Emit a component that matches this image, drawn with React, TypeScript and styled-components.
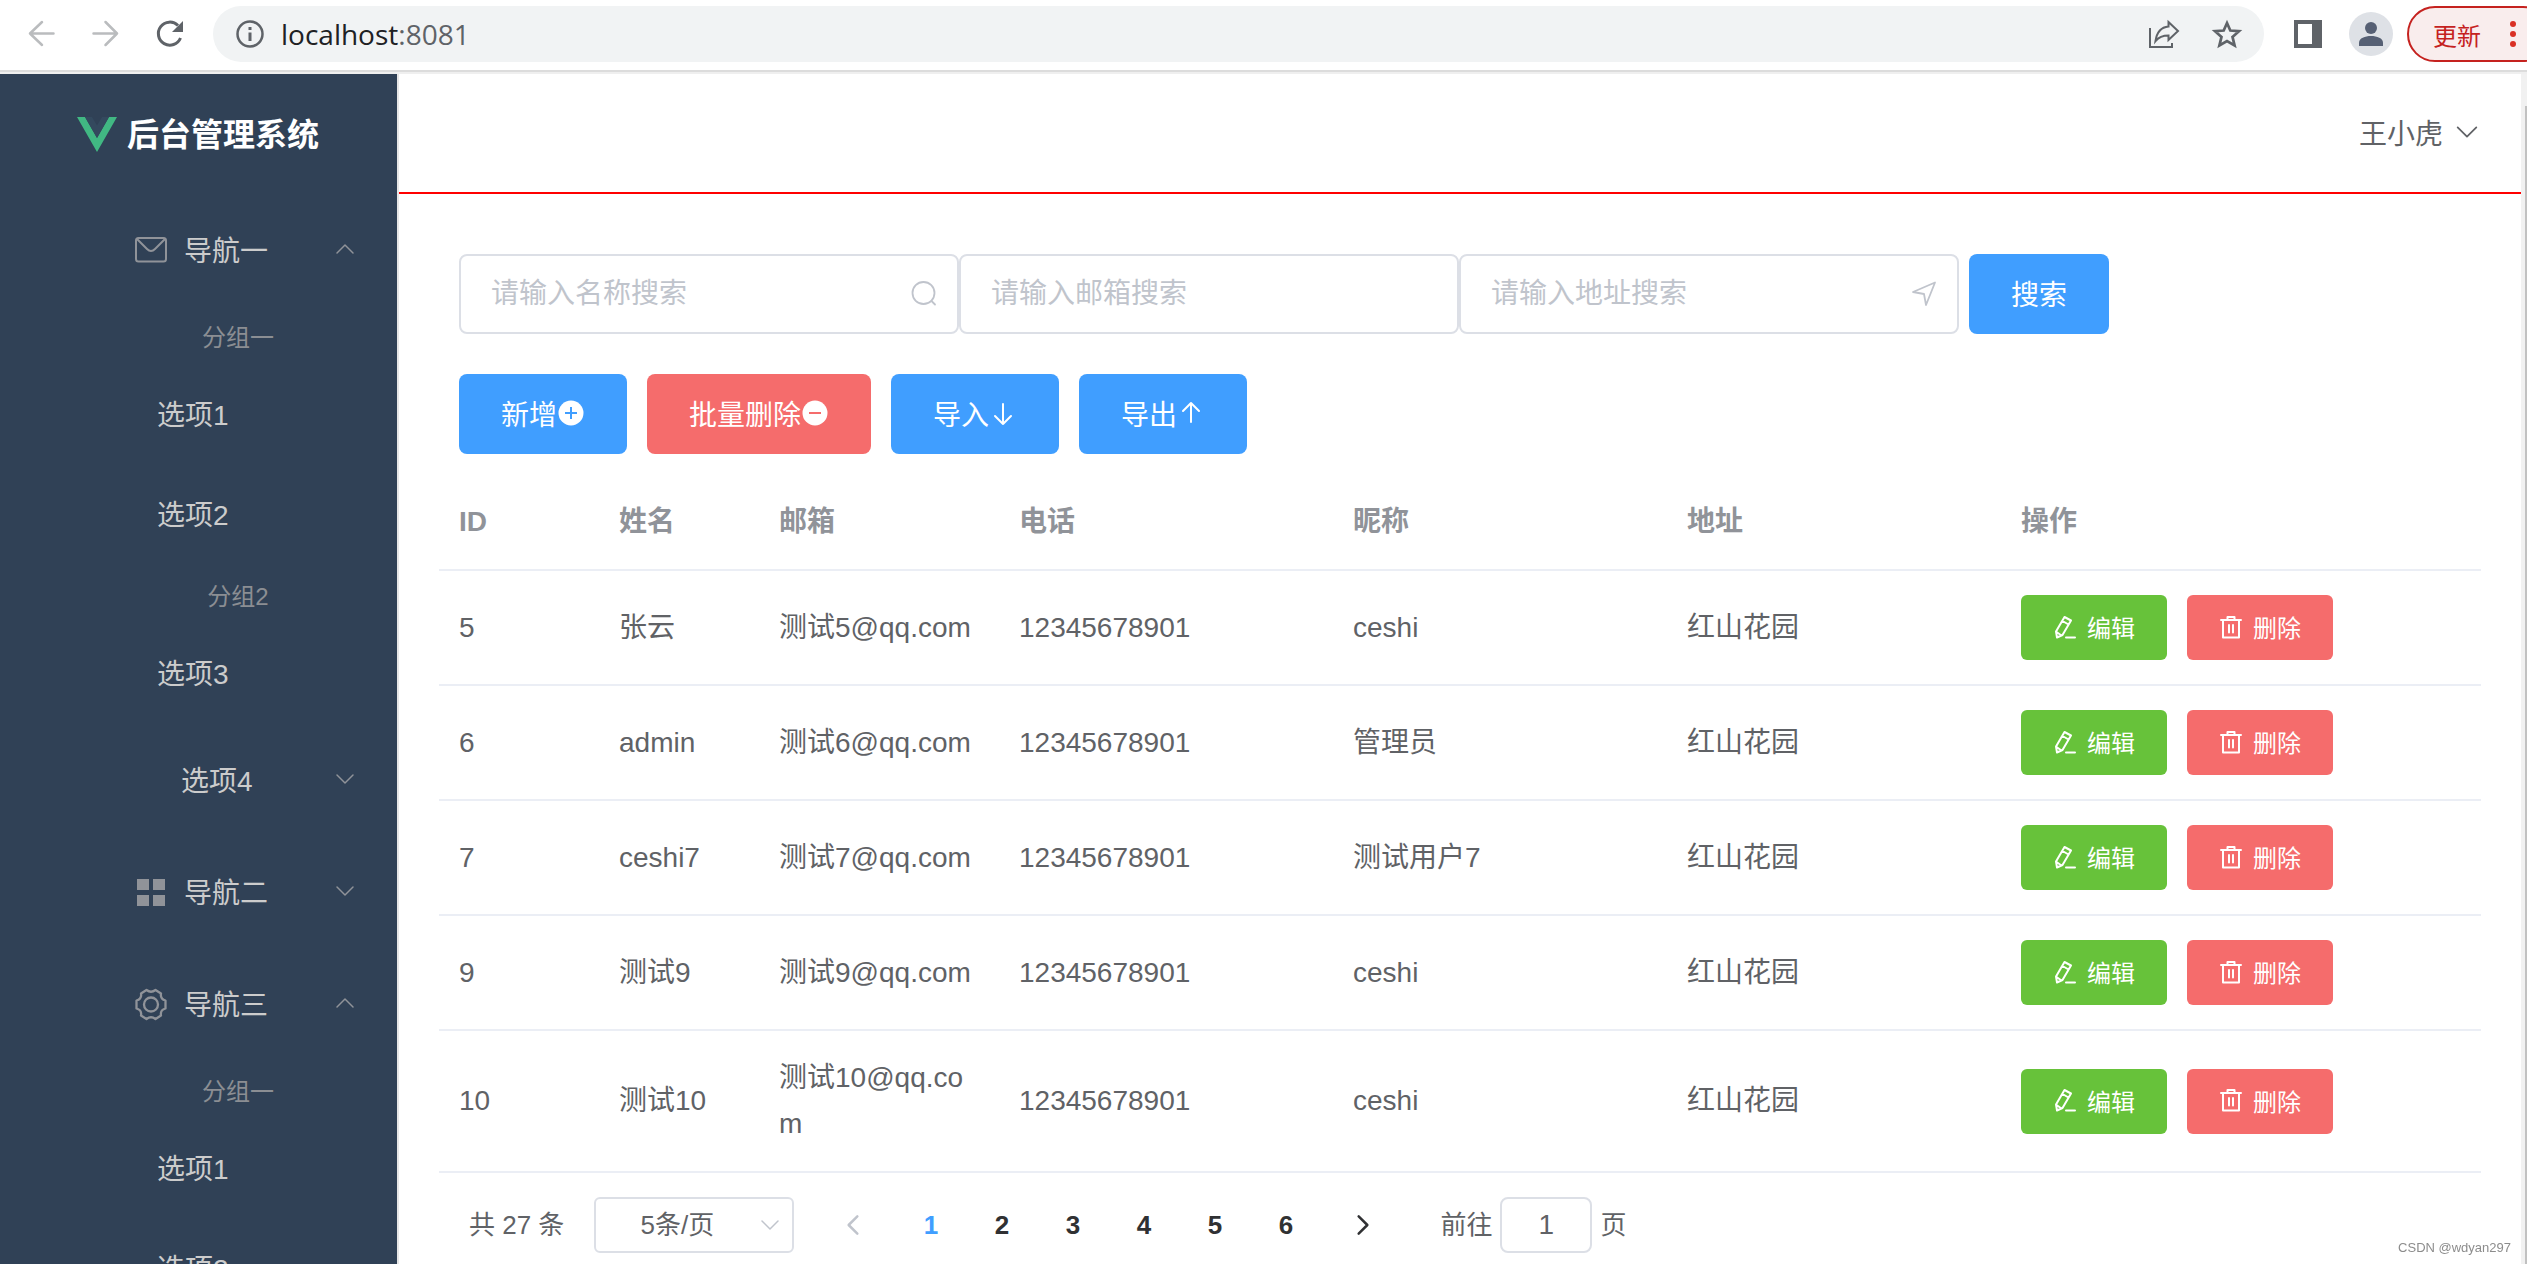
import React from "react";
import styled, { createGlobalStyle } from "styled-components";

const GlobalStyle = createGlobalStyle`
  * { box-sizing: border-box; }
  body {
    margin: 0;
    background: #fff;
    color: #606266;
    font-family: "Liberation Sans", Arial, "Noto Sans CJK SC", sans-serif;
    font-size: 28px;
  }
  button, input, select { font-family: inherit; margin: 0; }
`;

const Screen = styled.div`
  display: flex;
  flex-direction: column;
  height: 100vh;
  overflow: hidden;
`;

/* ---------- browser bar ---------- */

const BrowserBar = styled.header`
  flex: none;
  display: flex;
  align-items: center;
  height: 74px;
  padding: 0 0 4px 24px;
  overflow: hidden;
  background: #fff;
  border-bottom: 2px solid #efefef;
  box-shadow: inset 0 -2px 0 #dcdcdc;
`;

const BarButton = styled.button<{ $dim?: boolean; $gap?: number }>`
  flex: none;
  display: flex;
  align-items: center;
  justify-content: center;
  width: 34px;
  height: 34px;
  margin-right: ${(p) => p.$gap ?? 30}px;
  padding: 0;
  border: 0;
  background: none;
  color: ${(p) => (p.$dim ? "#babcbe" : "#5f6368")};
`;

const AddressBar = styled.div`
  flex: 1;
  display: flex;
  align-items: center;
  height: 56px;
  margin: 0 27px 0 -3px;
  padding: 0 18px 0 22px;
  border-radius: 28px;
  background: #f1f3f4;
  color: #5f6368;
  font-family: "Open Sans", "Noto Sans", sans-serif;
  font-size: 28px;
  line-height: 40px;
`;

const Address = styled.div`
  flex: 1;
  padding-left: 16px;
  b { font-weight: 400; color: #202124; }
`;

const AvatarCircle = styled.button`
  flex: none;
  width: 44px;
  height: 44px;
  margin-right: 14px;
  padding: 0;
  border: 0;
  border-radius: 50%;
  background: #dee1e6;
  overflow: hidden;
  svg { display: block; }
`;

const UpdateButton = styled.button`
  flex: none;
  display: flex;
  align-items: center;
  justify-content: space-between;
  width: 144px;
  height: 56px;
  margin-right: -24px;
  padding: 0 32px 0 24px;
  border: 2px solid #c5221f;
  border-radius: 28px;
  background: #f9eded;
  color: #c5221f;
  font-size: 24px;
`;

/* ---------- page frame ---------- */

const Page = styled.div`
  flex: 1;
  display: flex;
  min-height: 0;
`;

const Sidebar = styled.aside`
  flex: none;
  width: 399px;
  overflow: hidden;
  background: #304156;
  border-right: 2px solid #e6e6e6;
`;

const Brand = styled.div`
  display: flex;
  align-items: center;
  gap: 10px;
  height: 120px;
  padding-left: 77px;
  color: #fff;
  font-size: 32px;
  font-weight: 700;
  span { padding-bottom: 4px; }
`;

const NavTitle = styled.button<{ $indent?: number }>`
  display: flex;
  align-items: center;
  width: 100%;
  height: 112px;
  padding: 0 40px 2px ${(p) => p.$indent ?? 127}px;
  border: 0;
  background: none;
  color: #ccc;
  font-size: 28px;
  text-align: left;
  span { flex: 1; }
`;

const NavIcon = styled.i`
  display: flex;
  justify-content: center;
  width: 48px;
  margin-right: 9px;
  padding-top: 2px;
  color: #909399;
`;

const NavArrow = styled.svg`
  color: #909399;
`;

const GroupTitle = styled.div`
  padding: 16px 0 12px 79px;
  color: #8b8e93;
  font-size: 24px;
  line-height: 31px;
  text-align: center;
`;

const NavItem = styled.a`
  display: flex;
  align-items: center;
  height: 100px;
  padding: 0 0 4px 157px;
  color: #ccc;
  text-decoration: none;
`;

const Content = styled.div`
  flex: 1;
  min-width: 0;
  overflow: hidden;
`;

const TopBar = styled.div`
  display: flex;
  align-items: center;
  justify-content: flex-end;
  height: 120px;
  padding: 0 40px;
  border-bottom: 2px solid #f00;
`;

const UserMenu = styled.button`
  display: flex;
  align-items: center;
  gap: 10px;
  padding: 0 0 2px;
  border: 0;
  background: none;
  color: #606266;
  font-size: 28px;
`;

const Main = styled.main`
  padding: 60px 40px 0;
`;

const ScrollTrack = styled.div`
  flex: none;
  display: flex;
  width: 6px;
  padding: 32px 0 0 4px;
  background: #f1f1f1;
`;

const ScrollThumb = styled.div`
  flex: 1;
  background: #c1c1c1;
`;

/* ---------- tools ---------- */

const SearchRow = styled.form`
  display: flex;
  padding: 0 20px;
`;

const Field = styled.label`
  position: relative;
  flex: 0 1 500px;
  color: #c0c4cc;
  svg {
    position: absolute;
    top: 25px;
    right: 21px;
  }
`;

const TextInput = styled.input`
  display: block;
  width: 100%;
  height: 80px;
  padding: 0 60px 0 30px;
  border: 2px solid #dcdfe6;
  border-radius: 8px;
  background: #fff;
  color: #606266;
  font-size: 28px;
  outline: 0;
  &::placeholder { color: #c0c4cc; opacity: 1; }
`;

const tones = { primary: "#409eff", danger: "#f56c6c", success: "#67c23a" };
type Tone = keyof typeof tones;

const ActionButton = styled.button<{ $tone: Tone; $spaced?: boolean }>`
  flex: none;
  display: flex;
  align-items: center;
  height: 80px;
  margin-left: ${(p) => (p.$spaced ? 10 : 0)}px;
  padding: 0 42px 2px;
  border: 0;
  border-radius: 8px;
  background: ${(p) => tones[p.$tone]};
  color: #fff;
  font-size: 28px;
`;

const ActionRow = styled.div`
  display: flex;
  gap: 20px;
  padding: 40px 20px 20px;
`;

const SmallButton = styled.button<{ $tone: Tone }>`
  display: flex;
  align-items: center;
  gap: 10px;
  height: 65px;
  padding: 0 32px 2px;
  border: 0;
  border-radius: 6px;
  background: ${(p) => tones[p.$tone]};
  color: #fff;
  font-size: 24px;
`;

/* ---------- table ---------- */

const Table = styled.table`
  width: 100%;
  table-layout: fixed;
  border-collapse: separate;
  border-spacing: 0;
  line-height: 46px;
  th, td {
    padding: 24px 20px;
    border-bottom: 2px solid #ebeef5;
    text-align: left;
    vertical-align: middle;
    word-break: break-all;
  }
  th {
    padding-top: 25px;
    color: #909399;
    font-weight: 700;
  }
`;

const Col = styled.col<{ $width?: number }>`
  width: ${(p) => (p.$width ? `${p.$width}px` : "auto")};
`;

const RowActions = styled.div`
  display: flex;
  gap: 20px;
`;

/* ---------- pagination ---------- */

const Pagination = styled.nav`
  display: flex;
  align-items: center;
  padding: 24px 30px;
  font-size: 26px;
  line-height: 56px;
`;

const PageSize = styled.label`
  position: relative;
  width: 200px;
  height: 56px;
  margin: 0 17px 0 30px;
  color: #c0c4cc;
  svg {
    position: absolute;
    top: 16px;
    right: 12px;
  }
`;

const Select = styled.select`
  display: block;
  width: 100%;
  height: 56px;
  padding: 0 34px 0 0;
  border: 2px solid #dcdfe6;
  border-radius: 6px;
  background: #fff;
  color: #606266;
  font-size: 26px;
  text-align: center;
  text-align-last: center;
  appearance: none;
`;

const StepButton = styled.button`
  display: flex;
  align-items: center;
  justify-content: center;
  width: 84px;
  height: 56px;
  padding: 0;
  border: 0;
  background: none;
  color: #303133;
  &:disabled { color: #c0c4cc; }
`;

const PageButton = styled.button<{ $active?: boolean }>`
  width: 71px;
  height: 56px;
  padding: 0;
  border: 0;
  background: none;
  color: ${(p) => (p.$active ? "#409eff" : "#303133")};
  font-size: 26px;
  font-weight: 700;
`;

const Jump = styled.label`
  display: flex;
  gap: 8px;
  margin-left: 35px;
`;

const JumpInput = styled.input`
  width: 92px;
  height: 56px;
  padding: 0;
  border: 2px solid #dcdfe6;
  border-radius: 8px;
  color: #606266;
  font-size: 28px;
  text-align: center;
`;

const Watermark = styled.small`
  position: fixed;
  right: 16px;
  bottom: 8px;
  color: #8c8c8c;
  font-size: 13px;
  line-height: 16px;
`;

/* ---------- icons ---------- */

const line = {
  fill: "none",
  stroke: "currentColor",
  strokeWidth: 2,
  strokeLinecap: "round",
  strokeLinejoin: "round",
} as const;

const arrowPaths = {
  up: "M4 16 L12 8 L20 16",
  down: "M4 8 L12 16 L20 8",
  left: "M16 4 L8 12 L16 20",
  right: "M8 4 L16 12 L8 20",
};

const SideArrow = ({ open }: { open?: boolean }) => (
  <NavArrow width="24" height="24" viewBox="0 0 24 24" {...line} strokeWidth={1.5}>
    <path d={arrowPaths[open ? "up" : "down"]} />
  </NavArrow>
);

const Chevron = ({ dir, size, weight }: { dir: keyof typeof arrowPaths; size: number; weight: number }) => (
  <svg width={size} height={size} viewBox="0 0 24 24" {...line} strokeWidth={weight}>
    <path d={arrowPaths[dir]} />
  </svg>
);

const MailIcon = () => (
  <svg width="36" height="36" viewBox="0 0 36 36" {...line}>
    <rect x="3" y="6" width="30" height="23.500" rx="2.500" />
    <path d="M4 7 L14 17 Q18 21 22 17 L32 7" />
  </svg>
);

const GridIcon = () => (
  <svg width="36" height="36" viewBox="0 0 36 36" fill="currentColor">
    <path d="M4 5h12v11H4zM20 5h12v11H20zM4 21h12v11H4zM20 21h12v11H20z" />
  </svg>
);

const GearIcon = () => (
  <svg width="36" height="36" viewBox="0 0 36 36" {...line} strokeWidth={2.3}>
    <circle cx="18" cy="18.500" r="7" />
    <path d="M13.500 4 Q18 7.500 22.500 4 L28 7.500 Q27 13 32.500 14.500 V22.500 Q27 24 28 29.500 L22.500 33 Q18 29.500 13.500 33 L8 29.500 Q9 24 3.500 22.500 V14.500 Q9 13 8 7.500 Z" />
  </svg>
);

const SearchIcon = () => (
  <svg width="28" height="28" viewBox="0 0 28 28" {...line} strokeWidth={1.8}>
    <circle cx="13.500" cy="14" r="11" />
    <path d="M21.500 22 L25 25.500" />
  </svg>
);

const PositionIcon = () => (
  <svg width="28" height="28" viewBox="0 0 28 28" {...line} strokeWidth={1.8}>
    <path d="M3 13 L25 3.500 L16 26 L14 15 Z" />
  </svg>
);

const CircleIcon = ({ hole, plus }: { hole: string; plus?: boolean }) => (
  <svg width="28" height="28" viewBox="0 0 28 28">
    <circle cx="14" cy="14" r="12.500" fill="currentColor" />
    <path d={plus ? "M8 14H20M14 8V20" : "M8 14H20"} stroke={hole} strokeWidth="2" />
  </svg>
);

const BottomArrow = () => (
  <svg width="28" height="28" viewBox="0 0 28 28" {...line}>
    <path d="M14 5V25M6 17L14 25L22 17" />
  </svg>
);

const TopArrow = () => (
  <svg width="28" height="28" viewBox="0 0 28 28" {...line}>
    <path d="M14 23V4M6 12L14 4L22 12" />
  </svg>
);

const EditIcon = () => (
  <svg width="24" height="24" viewBox="0 0 24 24" {...line}>
    <path d="M11.500 2 L18 5.500 L9.500 20 L4 22.500 L3 16.500 Z M9.500 6 L15.500 9.500 M3.500 17 L8.500 20.500 M13 22.500 H22" />
  </svg>
);

const TrashIcon = () => (
  <svg width="24" height="24" viewBox="0 0 24 24" {...line}>
    <path d="M2 5H22M8.500 5V2H15.500V5M4 5V22.500H20V5M10 10V17.500M14 10V17.500" />
  </svg>
);

const VueLogo = () => (
  <svg width="40" height="35" viewBox="0 0 40 35">
    <path d="M0 0H8L20 21L32 0H40L20 35Z" fill="#41b883" />
    <path d="M8 0H15L20 8.500L25 0H32L20 21Z" fill="#34495e" />
  </svg>
);

/* ---------- data ---------- */

const rows = [
  { id: 5, name: "张云", mail: "测试5@qq.com", nick: "ceshi" },
  { id: 6, name: "admin", mail: "测试6@qq.com", nick: "管理员" },
  { id: 7, name: "ceshi7", mail: "测试7@qq.com", nick: "测试用户7" },
  { id: 9, name: "测试9", mail: "测试9@qq.com", nick: "ceshi" },
  { id: 10, name: "测试10", mail: "测试10@qq.com", nick: "ceshi" },
];
const headings = ["ID", "姓名", "邮箱", "电话", "昵称", "地址", "操作"];

function Browser() {
  return (
    <BrowserBar>
      <BarButton $dim aria-label="后退">
        <svg width="32" height="32" viewBox="0 0 32 32" {...line} strokeWidth={2.5}>
          <path d="M28.500 15.500H5M17 4L5 15.500L17 27" />
        </svg>
      </BarButton>
      <BarButton $dim aria-label="前进">
        <svg width="32" height="32" viewBox="0 0 32 32" {...line} strokeWidth={2.5}>
          <path d="M4.500 15.500H28M16.500 4L28 15.500L16.500 27" />
        </svg>
      </BarButton>
      <BarButton aria-label="刷新">
        <svg width="32" height="32" viewBox="0 0 32 32" {...line} strokeWidth={3}>
          <path d="M27.500 20A11.500 11.500 0 1 1 25 7.500" strokeLinecap="butt" />
          <path d="M30 3V14H19Z" fill="currentColor" stroke="none" />
        </svg>
      </BarButton>
      <AddressBar>
        <svg width="30" height="30" viewBox="0 0 30 30" {...line} strokeWidth={2.5} strokeLinecap="butt">
          <circle cx="15" cy="15" r="12.500" />
          <path d="M15 13.500V22M15 8V11" strokeWidth={3} />
        </svg>
        <Address>
          <b>localhost</b>:8081
        </Address>
        <BarButton aria-label="分享">
          <svg width="34" height="34" viewBox="0 0 34 34" {...line} strokeLinejoin="miter" strokeLinecap="butt">
            <path d="M4 11V30H26V26M22.500 5L32 14L22.500 23V18.500Q14 18.500 9.500 24Q11.500 10.500 22.500 9.500Z" />
          </svg>
        </BarButton>
        <BarButton aria-label="收藏" $gap={2}>
          <svg width="34" height="34" viewBox="0 0 34 34" {...line} strokeWidth={2.7} strokeLinejoin="miter">
            <path d="M17 6L20.300 13.500L29 14.200L22.500 19.900L24.600 28.500L17 24L9.400 28.500L11.500 19.900L5 14.200L13.700 13.500Z" />
          </svg>
        </BarButton>
      </AddressBar>
      <BarButton aria-label="侧边栏" $gap={24}>
        <svg width="28" height="28" viewBox="0 0 28 28">
          <path d="M0 0H28V28H0ZM4 4V24H18V4Z" fill="currentColor" fillRule="evenodd" />
        </svg>
      </BarButton>
      <AvatarCircle aria-label="用户">
        <svg width="44" height="44" viewBox="0 0 44 44" fill="#566074">
          <circle cx="22" cy="16" r="6" />
          <path d="M10 34V31C10 26 16 24 22 24S34 26 34 31V34Z" />
        </svg>
      </AvatarCircle>
      <UpdateButton>
        更新
        <svg width="8" height="32" viewBox="0 0 8 32" fill="#d93025">
          <circle cx="4" cy="6" r="3" />
          <circle cx="4" cy="16" r="3" />
          <circle cx="4" cy="26" r="3" />
        </svg>
      </UpdateButton>
    </BrowserBar>
  );
}

function SideMenu() {
  return (
    <Sidebar>
      <Brand>
        <VueLogo />
        <span>后台管理系统</span>
      </Brand>
      <NavTitle>
        <NavIcon><MailIcon /></NavIcon>
        <span>导航一</span>
        <SideArrow open />
      </NavTitle>
      <GroupTitle>分组一</GroupTitle>
      <NavItem href="#1-1">选项1</NavItem>
      <NavItem href="#1-2">选项2</NavItem>
      <GroupTitle>分组2</GroupTitle>
      <NavItem href="#1-3">选项3</NavItem>
      <NavTitle $indent={181}>
        <span>选项4</span>
        <SideArrow />
      </NavTitle>
      <NavTitle>
        <NavIcon><GridIcon /></NavIcon>
        <span>导航二</span>
        <SideArrow />
      </NavTitle>
      <NavTitle>
        <NavIcon><GearIcon /></NavIcon>
        <span>导航三</span>
        <SideArrow open />
      </NavTitle>
      <GroupTitle>分组一</GroupTitle>
      <NavItem href="#3-1">选项1</NavItem>
      <NavItem href="#3-2">选项2</NavItem>
    </Sidebar>
  );
}

export default function App() {
  return (
    <Screen>
      <GlobalStyle />
      <Browser />
      <Page>
        <SideMenu />
        <Content>
          <TopBar>
            <UserMenu>
              王小虎
              <Chevron dir="down" size={28} weight={1.5} />
            </UserMenu>
          </TopBar>
          <Main>
            <SearchRow onSubmit={(e) => e.preventDefault()}>
              <Field>
                <TextInput aria-label="名称" placeholder="请输入名称搜索" />
                <SearchIcon />
              </Field>
              <Field>
                <TextInput aria-label="邮箱" placeholder="请输入邮箱搜索" />
              </Field>
              <Field>
                <TextInput aria-label="地址" placeholder="请输入地址搜索" />
                <PositionIcon />
              </Field>
              <ActionButton $tone="primary" $spaced>搜索</ActionButton>
            </SearchRow>
            <ActionRow>
              <ActionButton $tone="primary">新增<CircleIcon hole={tones.primary} plus /></ActionButton>
              <ActionButton $tone="danger">批量删除<CircleIcon hole={tones.danger} /></ActionButton>
              <ActionButton $tone="primary">导入<BottomArrow /></ActionButton>
              <ActionButton $tone="primary">导出<TopArrow /></ActionButton>
            </ActionRow>
            <Table>
              <colgroup>
                <Col $width={160} />
                <Col $width={160} />
                <Col $width={240} />
                <Col />
                <Col />
                <Col />
                <Col $width={480} />
              </colgroup>
              <thead>
                <tr>{headings.map((h) => <th key={h} scope="col">{h}</th>)}</tr>
              </thead>
              <tbody>
                {rows.map((r) => (
                  <tr key={r.id}>
                    <td>{r.id}</td>
                    <td>{r.name}</td>
                    <td>{r.mail}</td>
                    <td>12345678901</td>
                    <td>{r.nick}</td>
                    <td>红山花园</td>
                    <td>
                      <RowActions>
                        <SmallButton $tone="success"><EditIcon />编辑</SmallButton>
                        <SmallButton $tone="danger"><TrashIcon />删除</SmallButton>
                      </RowActions>
                    </td>
                  </tr>
                ))}
              </tbody>
            </Table>
            <Pagination aria-label="分页">
              <span>共 27 条</span>
              <PageSize>
                <Select aria-label="每页条数" defaultValue="5">
                  <option value="5">5条/页</option>
                </Select>
                <Chevron dir="down" size={24} weight={1.5} />
              </PageSize>
              <StepButton disabled aria-label="上一页">
                <Chevron dir="left" size={26} weight={2.3} />
              </StepButton>
              {[1, 2, 3, 4, 5, 6].map((n) => (
                <PageButton key={n} $active={n === 1}>{n}</PageButton>
              ))}
              <StepButton aria-label="下一页">
                <Chevron dir="right" size={26} weight={2.3} />
              </StepButton>
              <Jump>
                前往
                <JumpInput defaultValue="1" />
                页
              </Jump>
            </Pagination>
          </Main>
        </Content>
        <ScrollTrack>
          <ScrollThumb />
        </ScrollTrack>
      </Page>
      <Watermark>CSDN @wdyan297</Watermark>
    </Screen>
  );
}
